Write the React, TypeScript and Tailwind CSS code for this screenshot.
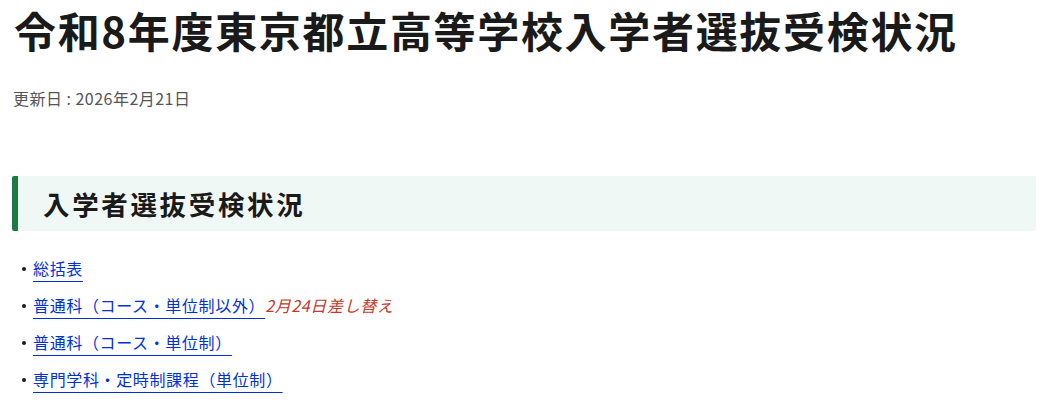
import React from "react";

const items = [
  { label: "総括表" },
  { label: "普通科（コース・単位制以外）", note: "2月24日差し替え" },
  { label: "普通科（コース・単位制）" },
  { label: "専門学科・定時制課程（単位制）" },
];

export default function App() {
  return (
    <div
      className="bg-white w-[1046px] h-[406px] overflow-hidden text-[#1a1a1a]"
      style={{ fontFamily: '"Noto Sans CJK JP", "Noto Sans", sans-serif' }}
    >
      <div className="pl-[12px] pr-[10px]">
        <h1 className="text-[42px] leading-[1.5] font-bold tracking-[0.04em] pl-[2px] pt-0 mt-[-2px]">
          令和8年度東京都立高等学校入学者選抜受検状況
        </h1>
        <p className="mt-[25px] text-[16px] leading-[1.5] tracking-[0.03em] text-[#555] pl-[1px]">
          更新日 : 2026年2月21日
        </p>
        <h2 className="mt-[66px] h-[55px] flex items-center bg-[#eff8f4] border-l-[6px] border-[#1e7a45] rounded-[2px] pl-[25px] text-[26.5px] font-bold tracking-[0.1em]">
          入学者選抜受検状況
        </h2>
        <ul className="mt-[25px] flex flex-col gap-[13px] text-[16px] leading-[24px] tracking-[0.04em]">
          {items.map((it) => (
            <li key={it.label} className="flex items-center">
              <span className="w-[21px] flex justify-center pl-[2px]">
                <span className="w-[4px] h-[4px] rounded-full bg-[#1a1a1a] block mt-[2px]" />
              </span>
              <a
                href="#"
                className="text-[#0031d8] underline underline-offset-[6px] decoration-[1px]"
              >
                {it.label}
              </a>
              {it.note && (
                <span className="text-[#c0392b] italic">{it.note}</span>
              )}
            </li>
          ))}
        </ul>
      </div>
    </div>
  );
}
